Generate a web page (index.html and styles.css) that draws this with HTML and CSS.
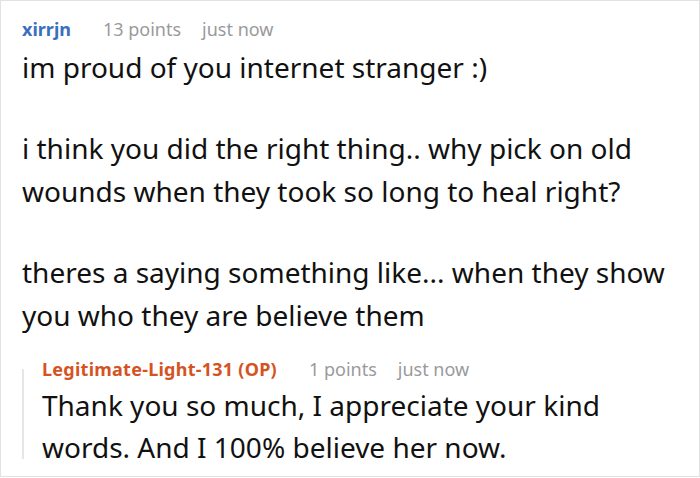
FILE: index.html
```html
<!DOCTYPE html>
<html>
<head>
<meta charset="utf-8">
<link rel="stylesheet" href="styles.css">
</head>
<body>
<div class="frame">
  <div class="comment">
    <div class="meta">
      <span class="user">xirrjn</span>
      <span class="info">13 points</span>
      <span class="info">just now</span>
    </div>
    <div class="body">
      <p>im proud of you internet stranger :)</p>
      <p>i think you did the right thing.. why pick on old wounds when they took so long to heal right?</p>
      <p>theres a saying something like... when they show you who they are believe them</p>
    </div>
    <div class="reply">
      <div class="rail"></div>
      <div class="reply-content">
        <div class="meta">
          <span class="user op">Legitimate-Light-131 (OP)</span>
          <span class="info">1 points</span>
          <span class="info">just now</span>
        </div>
        <div class="body reply-body">
          <p>Thank you so much, I appreciate your kind words. And I 100% believe her now.</p>
        </div>
      </div>
    </div>
  </div>
</div>
</body>
</html>
```
FILE: styles.css
```css
html, body {
  margin: 0;
  padding: 0;
  background: #ffffff;
}
.frame {
  box-sizing: border-box;
  width: 700px;
  height: 477px;
  border: 1px solid #e2e2e2;
  overflow: hidden;
  font-family: "Noto Sans", sans-serif;
  color: #111111;
}
.comment {
  padding: 16px 20px 0 21px;
}
.meta {
  display: flex;
  font-size: 18px;
  line-height: 24px;
}
.user {
  font-weight: 700;
  color: #3a6fc0;
  margin-right: 32px;
}
.user.op {
  color: #d5531f;
  letter-spacing: 0.25px;
}
.info {
  color: #9a9a9a;
  margin-right: 21px;
}
.body {
  font-size: 28px;
  line-height: 43px;
  margin-top: 5px;
}
.body p {
  margin: 0 0 38px 0;
}
.reply {
  display: flex;
  margin-top: -18px;
}
.rail {
  flex: none;
  width: 2px;
  background: #e6e6e6;
  margin: 12px 18px 9px 0;
}
.reply-content {
  flex: 1;
}
.reply-body {
  line-height: 42px;
  margin-top: 3px;
}
.reply .body p {
  margin: 0;
}
```
